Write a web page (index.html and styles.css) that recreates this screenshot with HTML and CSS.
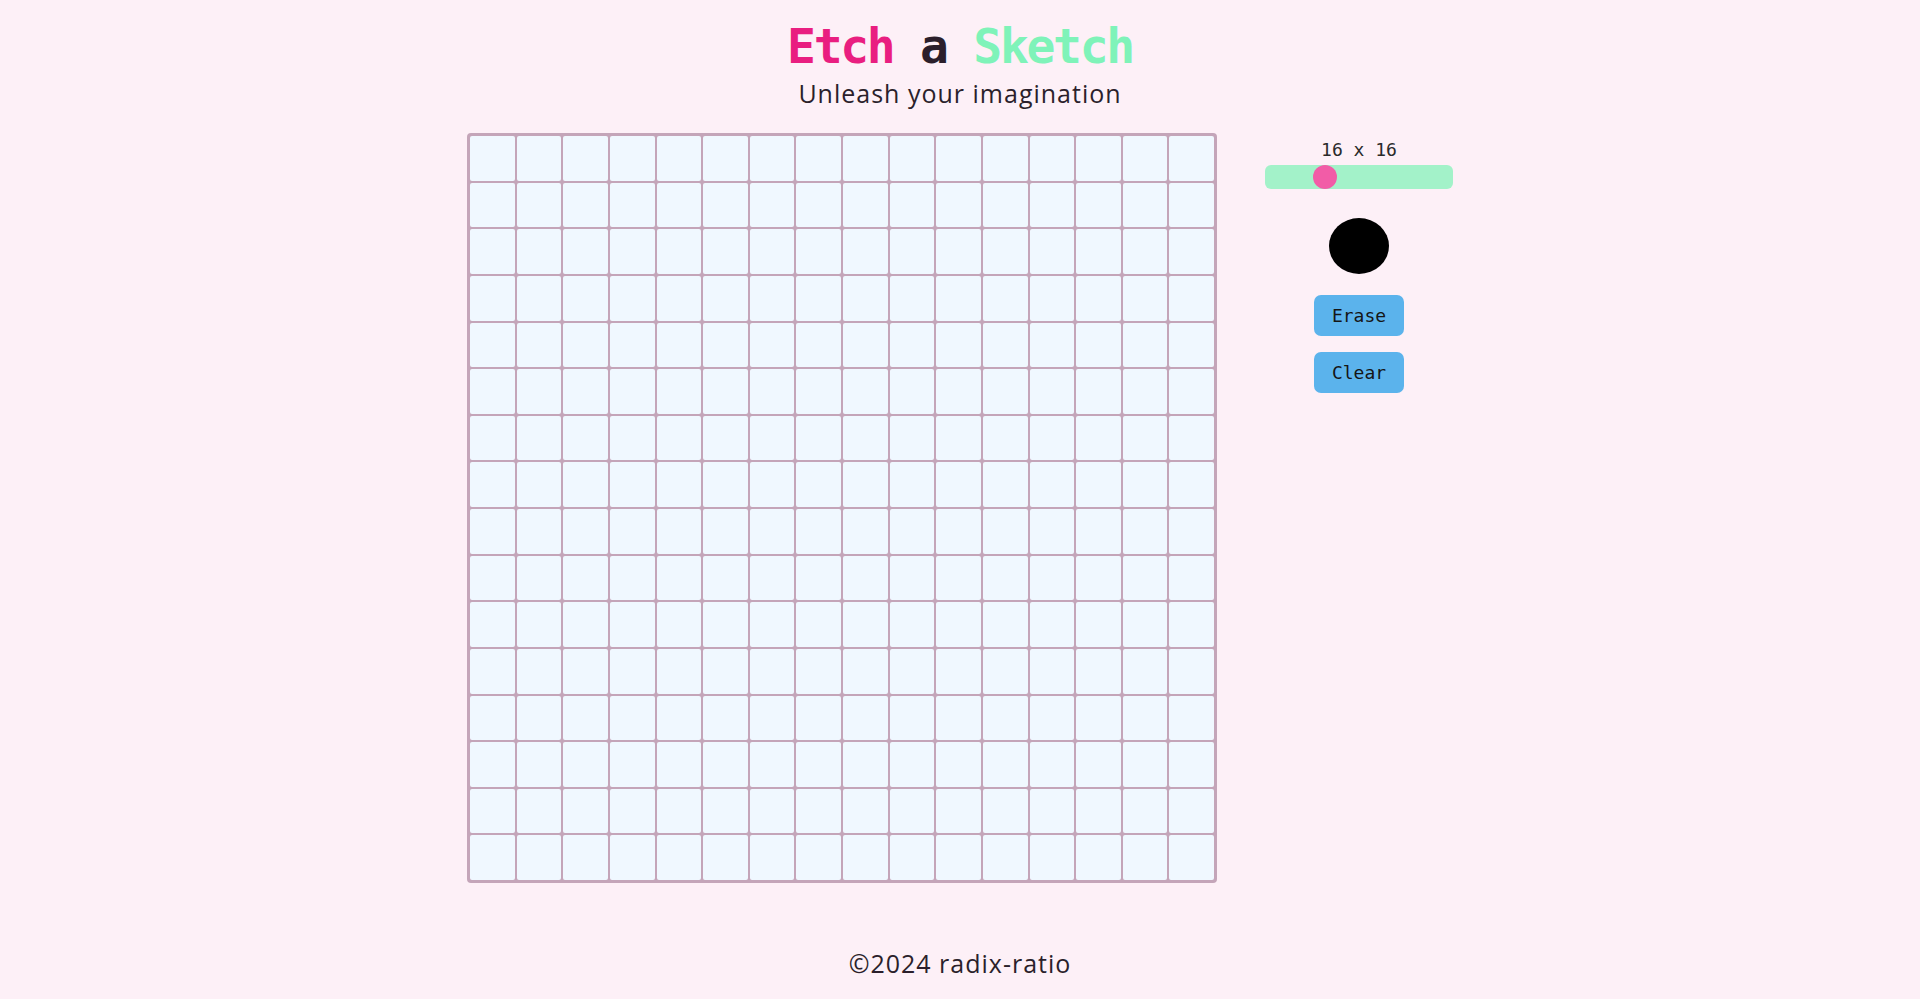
FILE: index.html
```html
<!DOCTYPE html>
<html lang="en">
<head>
<meta charset="utf-8">
<title>Etch a Sketch</title>
<link rel="stylesheet" href="styles.css">
</head>
<body>
  <header class="header">
    <h1 class="title"><span class="t-pink">Etch</span> <span class="t-dark">a</span> <span class="t-green">Sketch</span></h1>
    <p class="subtitle">Unleash your imagination</p>
  </header>
  <main class="main">
    <div class="board" id="board"></div>
    <aside class="controls">
      <div class="size-label">16 x 16</div>
      <input class="slider" type="range" min="2" max="50" value="16">
      <div class="color-dot"></div>
      <button class="btn">Erase</button>
      <button class="btn">Clear</button>
    </aside>
  </main>
  <footer class="footer">©2024 radix-ratio</footer>
  <script src="script.js"></script>
</body>
</html>
```
FILE: styles.css
```css
html, body {
  margin: 0;
  padding: 0;
}
body {
  background: #fdf0f7;
  height: 100vh;
  display: flex;
  flex-direction: column;
  align-items: center;
  font-family: "Open Sans", "Noto Sans", sans-serif;
  color: #2b1f2b;
}
.header {
  display: flex;
  flex-direction: column;
  align-items: center;
  padding-top: 22px;
}
.title {
  margin: 0;
  font-family: "DejaVu Sans Mono", monospace;
  font-weight: bold;
  font-size: 48px;
  line-height: 48px;
  letter-spacing: -2.3px;
}
.t-pink { color: #e91e80; }
.t-dark { color: #2b1f2b; }
.t-green { color: #7ff3b9; }
.subtitle {
  margin: 8px 0 0;
  font-size: 25px;
  line-height: 30px;
  letter-spacing: 1px;
  color: #2b1f2b;
}
.main {
  margin-top: 25px;
  display: flex;
  gap: 48px;
  align-items: flex-start;
}
.board {
  width: 750px;
  height: 750px;
  box-sizing: border-box;
  background: #c4a5b9;
  padding: 3px;
  border-radius: 4px;
  display: grid;
  grid-template-columns: repeat(16, 1fr);
  grid-template-rows: repeat(16, 1fr);
  gap: 2px;
}
.cell {
  background: #f0f8ff;
  border-radius: 2px;
}
.controls {
  width: 188px;
  display: flex;
  flex-direction: column;
  align-items: center;
  padding-top: 6px;
}
.size-label {
  font-family: "DejaVu Sans Mono", monospace;
  font-size: 18px;
  line-height: 21px;
  color: #2a2a2a;
}
.slider {
  -webkit-appearance: none;
  appearance: none;
  margin: 5px 0 0;
  width: 188px;
  height: 24px;
  background: #a3f2c9;
  border-radius: 6px;
  outline: none;
}
.slider::-webkit-slider-thumb {
  -webkit-appearance: none;
  appearance: none;
  width: 24px;
  height: 24px;
  border-radius: 50%;
  background: #f25ca7;
  border: none;
}
.color-dot {
  margin-top: 29px;
  width: 60px;
  height: 56px;
  border-radius: 50%;
  background: #000;
}
.btn {
  margin-top: 21px;
  width: 90px;
  height: 41px;
  border: none;
  border-radius: 7px;
  background: #5bb3ec;
  color: #151515;
  font-family: "DejaVu Sans Mono", monospace;
  font-size: 18px;
  padding: 0;
}
.btn + .btn {
  margin-top: 16px;
}
.footer {
  margin-top: auto;
  padding-bottom: 21px;
  font-size: 25px;
  line-height: 30px;
  letter-spacing: 1px;
  color: #2b1f2b;
}
```
FILE: script.js
```js
const board = document.getElementById('board');
for (let i = 0; i < 256; i++) {
  const c = document.createElement('div');
  c.className = 'cell';
  board.appendChild(c);
}
```
